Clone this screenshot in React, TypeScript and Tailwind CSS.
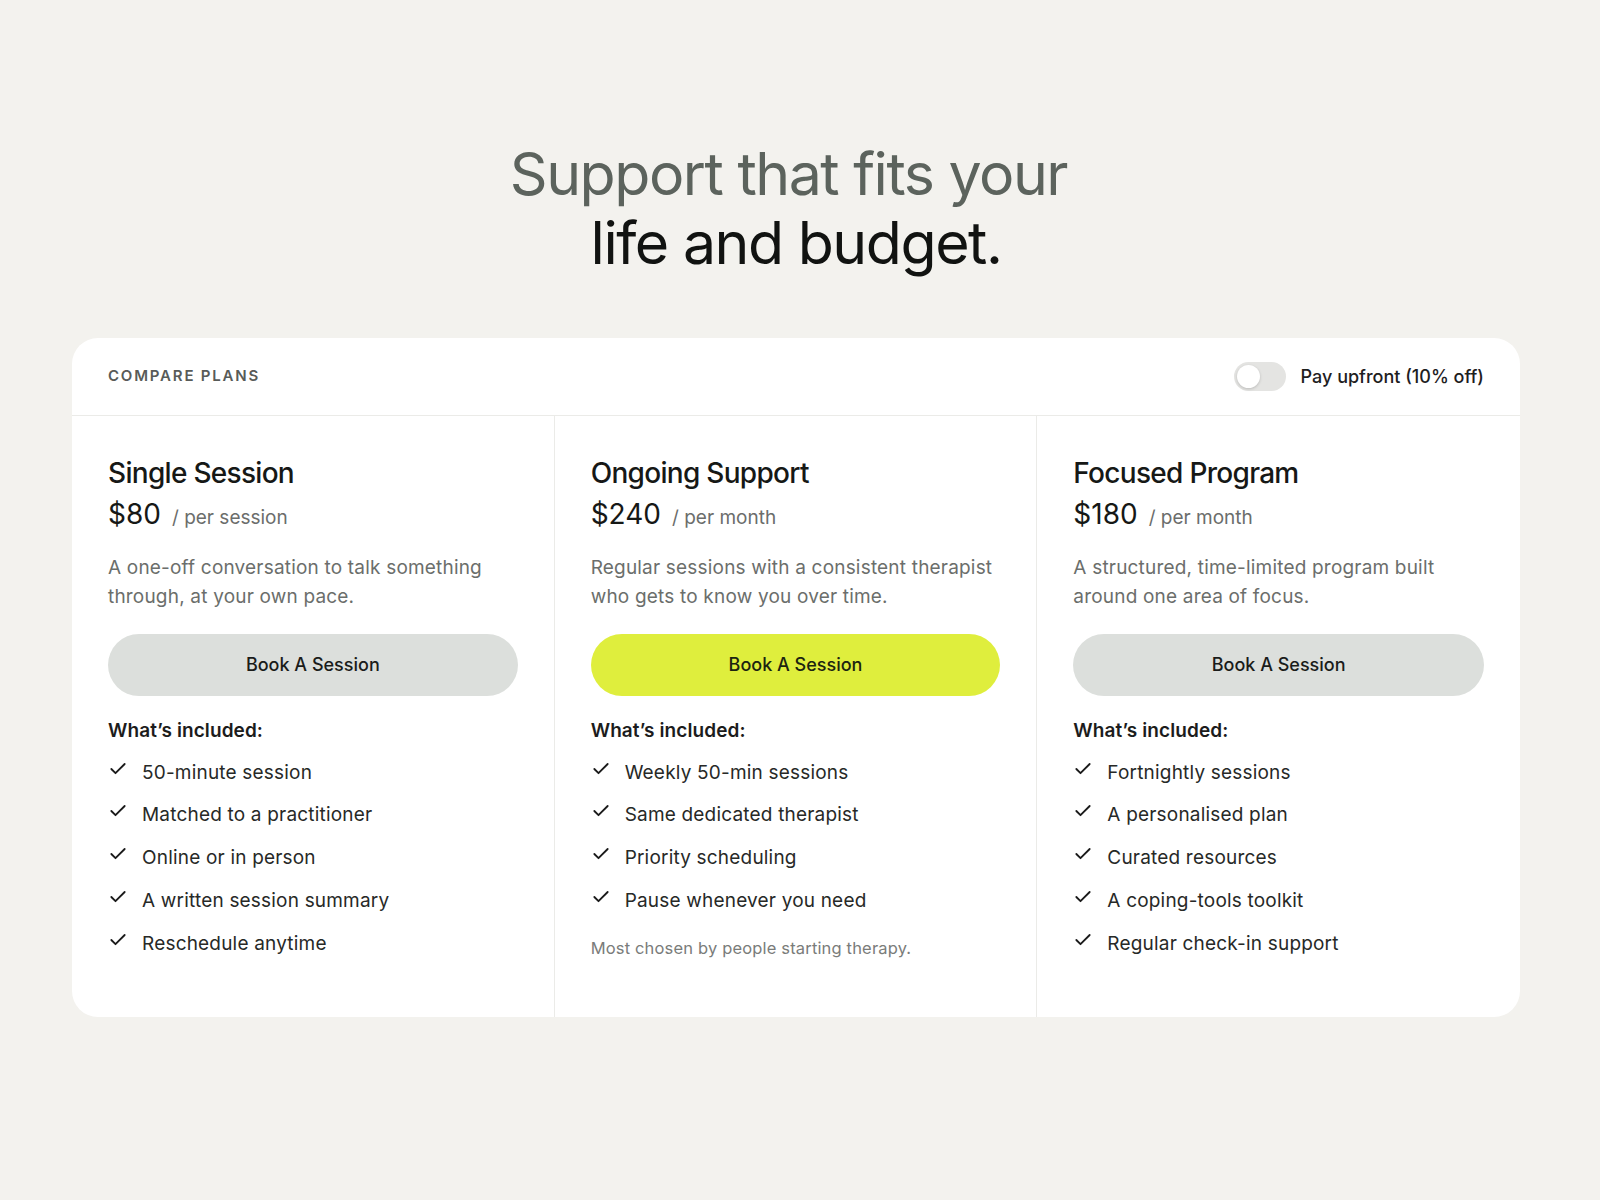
import React, { useState } from 'react';
import { Check } from 'lucide-react';

type Plan = {
  name: string;
  price: string;
  unit: string;
  description: string;
  features: string[];
  highlighted?: boolean;
  note?: string;
};

const plans: Plan[] = [
  {
    name: 'Single Session',
    price: '$80',
    unit: '/ per session',
    description: 'A one-off conversation to talk something through, at your own pace.',
    features: [
      '50-minute session',
      'Matched to a practitioner',
      'Online or in person',
      'A written session summary',
      'Reschedule anytime',
    ],
  },
  {
    name: 'Ongoing Support',
    price: '$240',
    unit: '/ per month',
    description: 'Regular sessions with a consistent therapist who gets to know you over time.',
    features: [
      'Weekly 50-min sessions',
      'Same dedicated therapist',
      'Priority scheduling',
      'Pause whenever you need',
    ],
    highlighted: true,
    note: 'Most chosen by people starting therapy.',
  },
  {
    name: 'Focused Program',
    price: '$180',
    unit: '/ per month',
    description: 'A structured, time-limited program built around one area of focus.',
    features: [
      'Fortnightly sessions',
      'A personalised plan',
      'Curated resources',
      'A coping-tools toolkit',
      'Regular check-in support',
    ],
  },
];

const Toggle = ({ on, onChange }: { on: boolean; onChange: (v: boolean) => void }) => (
  <button
    type="button"
    onClick={() => onChange(!on)}
    className={`relative h-[29px] w-[52px] rounded-full transition-colors ${on ? 'bg-[#dfee3d]' : 'bg-[#e4e4e2]'}`}
  >
    <span
      className={`absolute top-[3px] h-[23px] w-[23px] rounded-full bg-white shadow-[0_1px_3px_rgba(0,0,0,0.18)] transition-all ${on ? 'left-[26px]' : 'left-[3px]'}`}
    />
  </button>
);

const PlanColumn = ({ plan, last }: { plan: Plan; last: boolean }) => (
  <div className={`flex flex-col px-9 pt-[39px] pb-[57px] ${last ? '' : 'border-r border-[#ebebe8]'}`}>
    <h3 className="text-[28px] leading-[36px] font-medium tracking-[-0.025em] text-[#161816]">{plan.name}</h3>
    <div className="mt-[5px] flex items-baseline gap-[11px]">
      <span className="text-[28px] leading-[36px] text-[#161816]">{plan.price}</span>
      <span className="text-[19px] text-[#6b6d6b]">{plan.unit}</span>
    </div>
    <p className="mt-[20px] text-[19px] leading-[29px] tracking-[0.01em] text-[#6b6e6b]">{plan.description}</p>
    <button
      type="button"
      className={`mt-[23px] h-[62px] w-full rounded-full text-[18px] font-medium ${
        plan.highlighted ? 'bg-[#dfee3d] text-[#1c2410]' : 'bg-[#dcdfdc] text-[#1a1c1a]'
      }`}
    >
      Book A Session
    </button>
    <div className="mt-[21px] text-[19px] leading-[28px] font-semibold tracking-[0.005em] text-[#1c1c1c]">What’s included:</div>
    <ul className="mt-[14px] flex flex-col gap-[14.75px]">
      {plan.features.map((f) => (
        <li key={f} className="flex items-start gap-[14px] text-[19px] leading-[28px] tracking-[0.01em] text-[#272927]">
          <Check size={20} strokeWidth={2.2} className="shrink-0 text-[#1a1a1a]" />
          <span>{f}</span>
        </li>
      ))}
    </ul>
    {plan.note && <p className="mt-[21px] text-[16.5px] leading-[24px] tracking-[0.01em] text-[#7a7c7a]">{plan.note}</p>}
  </div>
);

export default function App() {
  const [upfront, setUpfront] = useState(false);

  return (
    <div className="min-h-screen w-full bg-[#f3f2ee] pr-2 pt-[139px] pb-20 font-['Inter',sans-serif]">
      <div className="mx-auto w-[1448px]">
        <h1 className="text-center text-[59px] leading-[69px] font-normal tracking-[-0.025em]">
          <span className="block text-[#5c635d]">Support that fits your{'\u00a0'}</span>
          <span className="block text-[#111311]">life and budget.</span>
        </h1>

        <div className="mt-[61px] overflow-hidden rounded-[26px] bg-white">
          <div className="flex h-[78px] items-center justify-between border-b border-[#ebebe8] px-9">
            <span className="text-[15px] font-semibold tracking-[0.12em] text-[#585b58]">COMPARE PLANS</span>
            <div className="flex items-center gap-[15px]">
              <Toggle on={upfront} onChange={setUpfront} />
              <span className="text-[18px] font-medium text-[#1e201e]">Pay upfront (10% off)</span>
            </div>
          </div>
          <div className="grid grid-cols-3">
            {plans.map((p, i) => (
              <PlanColumn key={p.name} plan={p} last={i === plans.length - 1} />
            ))}
          </div>
        </div>
      </div>
    </div>
  );
}
